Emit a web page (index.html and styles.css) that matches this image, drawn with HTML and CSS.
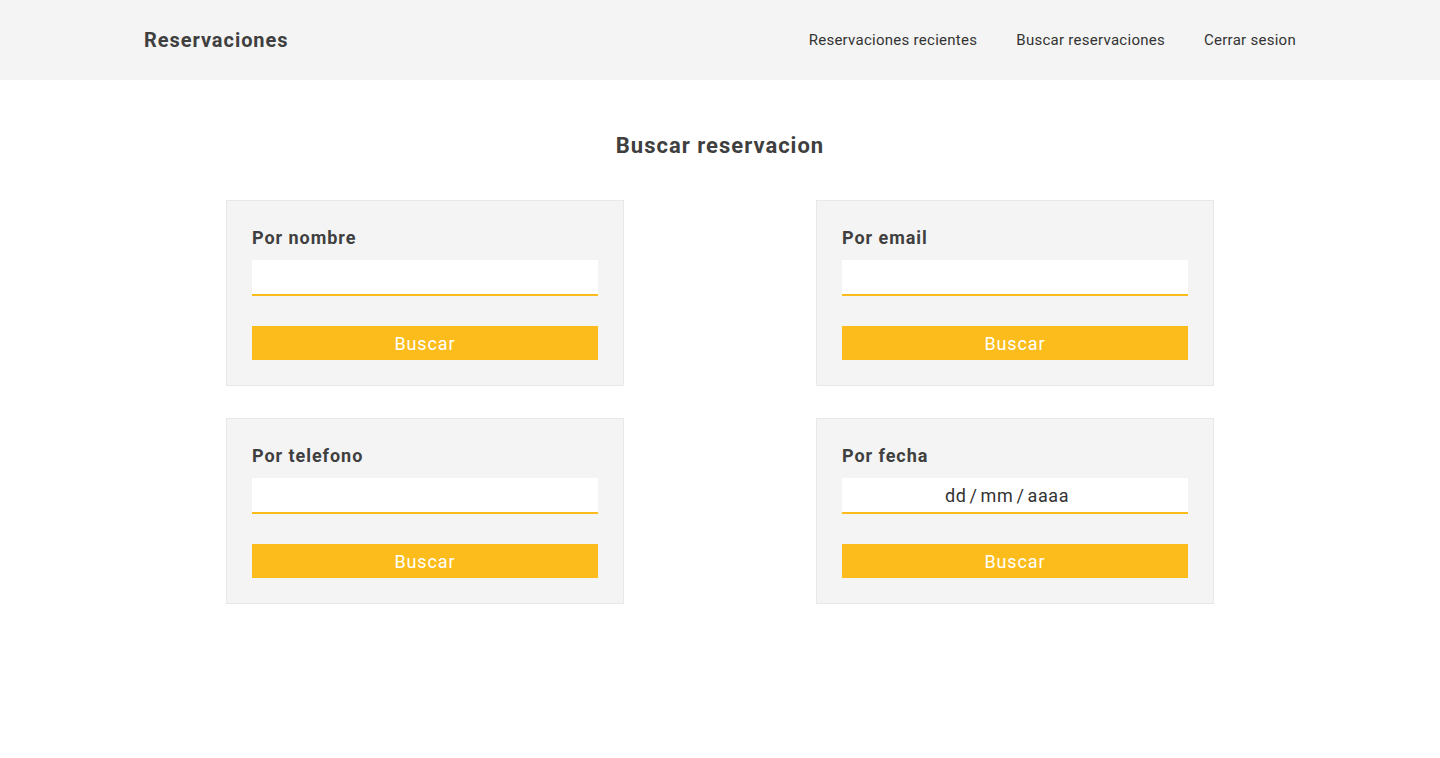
FILE: index.html
```html
<!DOCTYPE html>
<html lang="es">
<head>
<meta charset="utf-8">
<title>Reservaciones</title>
<link rel="stylesheet" href="styles.css">
</head>
<body>
<header class="topbar">
  <div class="topbar-inner">
    <div class="brand">Reservaciones</div>
    <nav class="nav">
      <a href="#">Reservaciones recientes</a>
      <a href="#">Buscar reservaciones</a>
      <a href="#">Cerrar sesion</a>
    </nav>
  </div>
</header>
<main class="main">
  <h1 class="title">Buscar reservacion</h1>
  <div class="grid">
    <form class="card">
      <label class="card-label">Por nombre</label>
      <input class="field" type="text">
      <button class="btn" type="button">Buscar</button>
    </form>
    <form class="card">
      <label class="card-label">Por email</label>
      <input class="field" type="text">
      <button class="btn" type="button">Buscar</button>
    </form>
    <form class="card">
      <label class="card-label">Por telefono</label>
      <input class="field" type="text">
      <button class="btn" type="button">Buscar</button>
    </form>
    <form class="card">
      <label class="card-label">Por fecha</label>
      <input class="field field-date" type="text" placeholder="dd / mm / aaaa">
      <button class="btn" type="button">Buscar</button>
    </form>
  </div>
</main>
</body>
</html>
```
FILE: styles.css
```css
* { box-sizing: border-box; }
html, body { margin: 0; padding: 0; }
body {
  font-family: Roboto, "Liberation Sans", sans-serif;
  color: #3f3f3f;
  background: #fff;
}
.topbar {
  background: #f4f4f4;
  height: 80px;
}
.topbar-inner {
  width: 1152px;
  margin: 0 auto;
  height: 80px;
  display: flex;
  align-items: center;
  justify-content: space-between;
}
.brand {
  font-size: 20px;
  font-weight: 700;
  letter-spacing: 0.95px;
  color: #3f3f3f;
}
.nav {
  display: flex;
  gap: 39px;
}
.nav a {
  font-size: 15px;
  letter-spacing: 0.27px;
  color: #333;
  text-decoration: none;
}
.main {
  padding-top: 51px;
}
.title {
  margin: 0;
  text-align: center;
  font-size: 22px;
  line-height: 30px;
  font-weight: 700;
  letter-spacing: 1px;
  color: #3f3f3f;
}
.grid {
  margin: 39px auto 0;
  width: 988px;
  display: grid;
  grid-template-columns: 398px 398px;
  justify-content: space-between;
  row-gap: 32px;
}
.card {
  margin: 0;
  background: #f4f4f4;
  border: 1px solid #e8e8e8;
  padding: 25px;
  display: flex;
  flex-direction: column;
}
.card-label {
  font-size: 18px;
  line-height: 24px;
  font-weight: 700;
  letter-spacing: 0.95px;
  color: #3f3f3f;
  margin-bottom: 10px;
}
.field {
  height: 36px;
  border: none;
  border-bottom: 2px solid #fcbd1c;
  background: #fff;
  font-family: Roboto, "Liberation Sans", sans-serif;
  font-size: 18px;
  color: #333;
  outline: none;
  padding: 0 10px;
  margin-bottom: 30px;
}
.field-date {
  text-align: center;
  letter-spacing: 0.6px;
  word-spacing: -2px;
  padding-right: 26px;
}
.field-date::placeholder {
  color: #333;
  opacity: 1;
}
.btn {
  height: 34px;
  border: none;
  background: #fcbd1c;
  color: #fff;
  font-family: Roboto, "Liberation Sans", sans-serif;
  font-size: 18px;
  letter-spacing: 0.9px;
  cursor: pointer;
  padding: 0;
}
```
